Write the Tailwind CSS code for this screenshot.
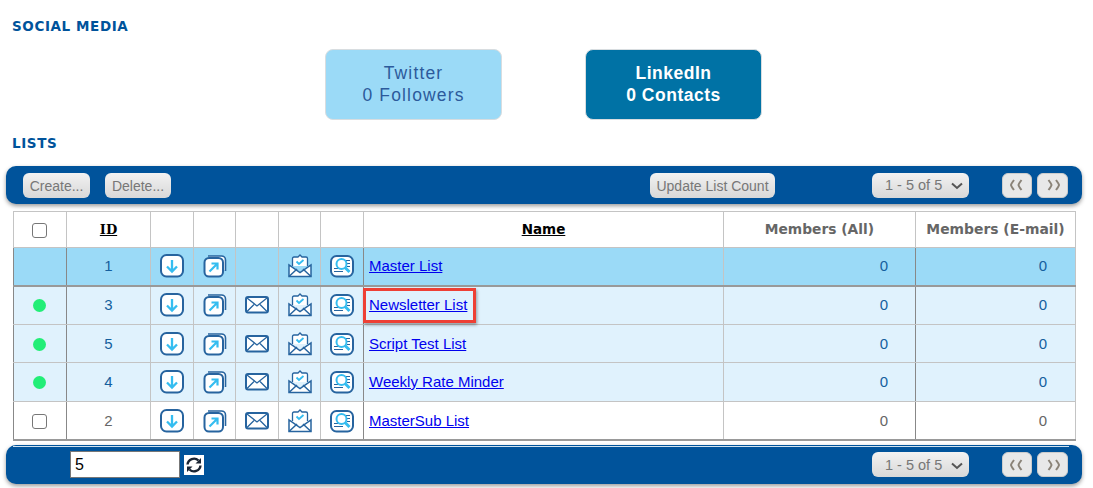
<!DOCTYPE html>
<html lang="en">
<head>
  <meta charset="UTF-8" />
  <title>Lists</title>
  <script src="https://cdn.jsdelivr.net/npm/@tailwindcss/browser@4"></script>
</head>
<body class="bg-white font-['Liberation_Sans',Arial,sans-serif] overflow-hidden">
  <!-- icon set -->
  <svg class="hidden">
    <symbol id="i-down" viewBox="0 0 26 24">
      <rect x="2" y="1" width="22" height="21.500" rx="5.500" fill="#fff" stroke="#27649f" stroke-width="2" />
      <path d="M13 6v11M8 12.500 13 17.500l5-5" fill="none" stroke="#35bdf0" stroke-width="2.300" />
    </symbol>
    <symbol id="i-copy" viewBox="0 0 26 24">
      <path d="M6 2h13.500a4 4 0 0 1 4 4v11" fill="#fff" stroke="#27649f" stroke-width="1.600" />
      <rect x="2.500" y="4" width="18.500" height="18.500" rx="4.500" fill="#fff" stroke="#27649f" stroke-width="2" />
      <path d="M7.500 17.500 15 10M9.500 9.500h6v6" fill="none" stroke="#35bdf0" stroke-width="2.200" />
    </symbol>
    <symbol id="i-mail" viewBox="0 0 26 20">
      <rect x="2" y="2" width="22" height="15.500" rx="2" fill="#fff" stroke="#27649f" stroke-width="2" />
      <path d="M3 3 13 11l10-8M3 16.500 10 9.500M23 16.500 16 9.500" fill="none" stroke="#27649f" stroke-width="1.300" />
    </symbol>
    <symbol id="i-open" viewBox="0 0 26 24">
      <path d="M5.500 12V4.500q0-1.500 1.500-1.500h4l2-2 2 2h4q1.500 0 1.500 1.500V12" fill="#fff" stroke="#27649f" stroke-width="1.300" />
      <path d="M9.500 7.500l2.500 2.500 4.500-4" fill="none" stroke="#35bdf0" stroke-width="1.800" />
      <path d="M2 11v11.500h22V11l-11 7.500z" fill="#fff" stroke="#27649f" stroke-width="1.500" />
      <path d="M2 22.500l8-7.500M24 22.500l-8-7.500" fill="none" stroke="#27649f" stroke-width="1.500" />
    </symbol>
    <symbol id="i-report" viewBox="0 0 26 24">
      <rect x="2" y="2" width="22" height="20.500" rx="5.500" fill="#fff" stroke="#27649f" stroke-width="2" />
      <path d="M16 6.500h5M18 9.500h3M18 12.500h3M5 14.500h4M5 17.500h9" fill="none" stroke="#27649f" stroke-width="1.200" />
      <circle cx="12.500" cy="10" r="5" fill="#fff" stroke="#35bdf0" stroke-width="2" />
      <path d="M16 13.500l4.500 4.500" fill="none" stroke="#35bdf0" stroke-width="3" />
    </symbol>
    <symbol id="i-prev" viewBox="0 0 16 12">
      <path d="M5 1Q2 5 2 6t3 5M12.500 1Q9.500 5 9.500 6t3 5" fill="none" stroke="#8a8378" stroke-width="2" />
    </symbol>
    <symbol id="i-next" viewBox="0 0 16 12">
      <path d="M3.500 1Q6.500 5 6.500 6t-3 5M11 1Q14 5 14 6t-3 5" fill="none" stroke="#8a8378" stroke-width="2" />
    </symbol>
  </svg>

  <main class="w-[1093px] h-[488px] overflow-hidden">
    <h2 class="pl-3 pt-[18px] h-[49px] font-['DejaVu_Sans',sans-serif] font-bold text-[13.500px] tracking-[0.6px] leading-4 text-[#00539b]">SOCIAL MEDIA</h2>

    <div class="flex gap-[83px] pl-[325px]">
      <div class="w-[177px] h-[71px] rounded-lg border border-[#d8dde0] bg-[#9bdaf7] flex flex-col justify-center pb-[2px] text-center text-[17.500px] leading-[22px] tracking-[1.150px] text-[#2c5a9c]">
        <span>Twitter</span>
        <span>0 Followers</span>
      </div>
      <div class="w-[177px] h-[71px] rounded-lg border border-[#d8dde0] bg-[#0072a5] flex flex-col justify-center pb-[2px] text-center text-[17.500px] leading-[22px] tracking-[0.500px] font-bold text-white">
        <span>LinkedIn</span>
        <span>0 Contacts</span>
      </div>
    </div>

    <h2 class="pl-3 mt-[15px] h-[31px] font-['DejaVu_Sans',sans-serif] font-bold text-[13.500px] tracking-[0.6px] leading-4 text-[#00539b]">LISTS</h2>

    <!-- top toolbar -->
    <div class="ml-[6px] w-[1076px] h-[38px] rounded-[10px] bg-[#00539b] shadow-[0_2px_4px_rgba(0,0,0,0.4)] flex items-center pl-[17px] text-[14px] text-[#777]">
      <button class="w-[67px] h-[25px] rounded-md bg-gradient-to-b from-[#f2f2f2] to-[#d8d8d8] pt-[3px]">Create...</button>
      <button class="w-[66px] h-[25px] ml-[15px] rounded-md bg-gradient-to-b from-[#f2f2f2] to-[#d8d8d8] pt-[3px]">Delete...</button>
      <button class="w-[125px] h-[25px] ml-[479px] rounded-md bg-gradient-to-b from-[#f2f2f2] to-[#d8d8d8] pt-[3px]">Update List Count</button>
      <div class="w-[97px] h-[25px] ml-[97px] rounded-md bg-gradient-to-b from-[#f2f2f2] to-[#d8d8d8] flex items-center justify-between pt-[2px] pl-[13px] pr-[6px] text-[14.500px]">
        <span>1 - 5 of 5</span>
        <svg width="12" height="8" viewBox="0 0 12 8"><path d="M1 1.500 6 6l5-4.500" fill="none" stroke="#555" stroke-width="2" /></svg>
      </div>
      <button class="w-[30px] h-[25px] ml-[33px] rounded-md bg-[#e8e8e8] border border-[#ccc] flex items-center justify-center"><svg width="16" height="12"><use href="#i-prev" /></svg></button>
      <button class="w-[31px] h-[25px] ml-[5px] rounded-md bg-[#e8e8e8] border border-[#ccc] flex items-center justify-center"><svg width="16" height="12"><use href="#i-next" /></svg></button>
    </div>

    <!-- table -->
    <div class="relative ml-[13px] mt-[7px] w-[1062px]">
      <table class="table-fixed border-collapse w-[1062px] text-[15px] border-t border-r border-[#c4c4c4] border-b-2 border-b-[#999]">
        <colgroup>
          <col class="w-[53px]" /><col class="w-[84px]" /><col class="w-[43px]" /><col class="w-[42px]" /><col class="w-[43px]" /><col class="w-[42px]" /><col class="w-[43px]" /><col class="w-[360px]" /><col class="w-[192px]" /><col class="w-[160px]" />
        </colgroup>
        <thead>
          <tr class="h-[36px] bg-white [&>th]:border-b [&>th]:border-[#c4c4c4]">
            <th class="border-l border-l-[#888] text-center align-middle pr-[2px]"><span class="inline-block w-[15px] h-[15px] rounded-[3px] border border-[#777] bg-white align-middle"></span></th>
            <th class="border-l border-l-[#888] font-['DejaVu_Serif',serif] text-[13px] text-black underline">ID</th>
            <th class="border-l border-l-[#c4c4c4]"></th>
            <th class="border-l border-l-[#c4c4c4]"></th>
            <th class="border-l border-l-[#c4c4c4]"></th>
            <th class="border-l border-l-[#c4c4c4]"></th>
            <th class="border-l border-l-[#c4c4c4]"></th>
            <th class="border-l border-l-[#888] font-['DejaVu_Sans',sans-serif] text-[13.500px] text-black underline">Name</th>
            <th class="border-l border-l-[#c4c4c4] text-right pr-[41px] font-['DejaVu_Sans',sans-serif] text-[13.800px] text-[#666]">Members (All)</th>
            <th class="border-l border-l-[#888] text-center font-['DejaVu_Sans',sans-serif] text-[13.900px] text-[#666]">Members (E-mail)</th>
          </tr>
        </thead>
        <tbody class="[&_svg]:mx-auto [&_a]:text-[#0000ee] [&_a]:underline [&_a]:text-[15px]">
          <tr class="h-[38px] bg-[#9bdaf7] text-[#155f9e] [&>td]:border-b-2 [&>td]:border-b-[#999]">
            <td class="border-l border-l-[#888]"></td>
            <td class="border-l border-l-[#888] text-center">1</td>
            <td class="border-l border-l-[#c4c4c4]"><svg width="26" height="24"><use href="#i-down" /></svg></td>
            <td class="border-l border-l-[#c4c4c4]"><svg width="26" height="24"><use href="#i-copy" /></svg></td>
            <td class="border-l border-l-[#c4c4c4]"></td>
            <td class="border-l border-l-[#c4c4c4]"><svg width="26" height="24"><use href="#i-open" /></svg></td>
            <td class="border-l border-l-[#c4c4c4]"><svg width="26" height="24"><use href="#i-report" /></svg></td>
            <td class="border-l border-l-[#888] pl-[5px]"><a href="#">Master List</a></td>
            <td class="border-l border-l-[#c4c4c4] text-right pr-[27px]">0</td>
            <td class="border-l border-l-[#888] text-right pr-[28px]">0</td>
          </tr>
          <tr class="h-[39px] bg-[#e0f2fd] text-[#155f9e] [&>td]:border-b [&>td]:border-b-[#c4c4c4]">
            <td class="border-l border-l-[#888] pr-[2px]"><div class="mx-auto w-[13px] h-[13px] rounded-full bg-[#22ee77]"></div></td>
            <td class="border-l border-l-[#888] text-center">3</td>
            <td class="border-l border-l-[#c4c4c4]"><svg width="26" height="24"><use href="#i-down" /></svg></td>
            <td class="border-l border-l-[#c4c4c4]"><svg width="26" height="24"><use href="#i-copy" /></svg></td>
            <td class="border-l border-l-[#c4c4c4]"><svg width="26" height="20"><use href="#i-mail" /></svg></td>
            <td class="border-l border-l-[#c4c4c4]"><svg width="26" height="24"><use href="#i-open" /></svg></td>
            <td class="border-l border-l-[#c4c4c4]"><svg width="26" height="24"><use href="#i-report" /></svg></td>
            <td class="border-l border-l-[#888] pl-[5px]"><a href="#">Newsletter List</a></td>
            <td class="border-l border-l-[#c4c4c4] text-right pr-[27px]">0</td>
            <td class="border-l border-l-[#888] text-right pr-[28px]">0</td>
          </tr>
          <tr class="h-[38px] bg-[#e0f2fd] text-[#155f9e] [&>td]:border-b [&>td]:border-b-[#c4c4c4] [&>td]:pt-px">
            <td class="border-l border-l-[#888] pr-[2px]"><div class="mx-auto w-[13px] h-[13px] rounded-full bg-[#22ee77]"></div></td>
            <td class="border-l border-l-[#888] text-center">5</td>
            <td class="border-l border-l-[#c4c4c4]"><svg width="26" height="24"><use href="#i-down" /></svg></td>
            <td class="border-l border-l-[#c4c4c4]"><svg width="26" height="24"><use href="#i-copy" /></svg></td>
            <td class="border-l border-l-[#c4c4c4]"><svg width="26" height="20"><use href="#i-mail" /></svg></td>
            <td class="border-l border-l-[#c4c4c4]"><svg width="26" height="24"><use href="#i-open" /></svg></td>
            <td class="border-l border-l-[#c4c4c4]"><svg width="26" height="24"><use href="#i-report" /></svg></td>
            <td class="border-l border-l-[#888] pl-[5px]"><a href="#">Script Test List</a></td>
            <td class="border-l border-l-[#c4c4c4] text-right pr-[27px]">0</td>
            <td class="border-l border-l-[#888] text-right pr-[28px]">0</td>
          </tr>
          <tr class="h-[39px] bg-[#e0f2fd] text-[#155f9e] [&>td]:border-b [&>td]:border-b-[#c4c4c4]">
            <td class="border-l border-l-[#888] pr-[2px]"><div class="mx-auto w-[13px] h-[13px] rounded-full bg-[#22ee77]"></div></td>
            <td class="border-l border-l-[#888] text-center">4</td>
            <td class="border-l border-l-[#c4c4c4]"><svg width="26" height="24"><use href="#i-down" /></svg></td>
            <td class="border-l border-l-[#c4c4c4]"><svg width="26" height="24"><use href="#i-copy" /></svg></td>
            <td class="border-l border-l-[#c4c4c4]"><svg width="26" height="20"><use href="#i-mail" /></svg></td>
            <td class="border-l border-l-[#c4c4c4]"><svg width="26" height="24"><use href="#i-open" /></svg></td>
            <td class="border-l border-l-[#c4c4c4]"><svg width="26" height="24"><use href="#i-report" /></svg></td>
            <td class="border-l border-l-[#888] pl-[5px]"><a href="#">Weekly Rate Minder</a></td>
            <td class="border-l border-l-[#c4c4c4] text-right pr-[27px]">0</td>
            <td class="border-l border-l-[#888] text-right pr-[28px]">0</td>
          </tr>
          <tr class="h-[38px] bg-white text-[#666] [&>td]:pt-px">
            <td class="border-l border-l-[#888] text-center pr-[2px]"><span class="inline-block w-[15px] h-[15px] rounded-[3px] border border-[#777] bg-white align-middle"></span></td>
            <td class="border-l border-l-[#888] text-center">2</td>
            <td class="border-l border-l-[#c4c4c4]"><svg width="26" height="24"><use href="#i-down" /></svg></td>
            <td class="border-l border-l-[#c4c4c4]"><svg width="26" height="24"><use href="#i-copy" /></svg></td>
            <td class="border-l border-l-[#c4c4c4]"><svg width="26" height="20"><use href="#i-mail" /></svg></td>
            <td class="border-l border-l-[#c4c4c4]"><svg width="26" height="24"><use href="#i-open" /></svg></td>
            <td class="border-l border-l-[#c4c4c4]"><svg width="26" height="24"><use href="#i-report" /></svg></td>
            <td class="border-l border-l-[#888] pl-[5px]"><a href="#">MasterSub List</a></td>
            <td class="border-l border-l-[#c4c4c4] text-right pr-[27px]">0</td>
            <td class="border-l border-l-[#888] text-right pr-[28px]">0</td>
          </tr>
        </tbody>
      </table>
      <!-- callout round Newsletter List -->
      <div class="absolute left-[350px] top-[77px] w-[113px] h-[35px] border-[3px] border-[#ee4035] shadow-[1px_2px_3px_rgba(0,0,0,0.35)]"></div>
    </div>

    <!-- bottom toolbar -->
    <div class="relative ml-[6px] mt-[4px] w-[1076px] h-[39px] rounded-[10px] bg-[#00539b] shadow-[0_2px_4px_rgba(0,0,0,0.4)] flex items-center pt-[1px] pl-[64px] text-[14.500px] text-[#777]">
      <div class="absolute left-[7px] top-[1px] w-[1056px] h-px bg-[#cfe3f2]"></div>
      <div class="w-[110px] h-[27px] bg-white border border-[#777] pl-1 text-[16px] leading-[25px] text-black">5</div>
      <div class="w-5 h-5 ml-[4px] bg-white flex items-center justify-center">
        <svg width="18" height="18" viewBox="0 0 18 18"><path d="M2.500 8.500a6.500 6.500 0 0 1 11-4M15.500 9.500a6.500 6.500 0 0 1-11 4" fill="none" stroke="#1a2433" stroke-width="2.400" /><path d="M16 2v5.500h-5.500zM2 16v-5.500h5.500z" fill="#1a2433" /></svg>
      </div>
      <div class="w-[97px] h-[25px] ml-[668px] rounded-md bg-gradient-to-b from-[#f2f2f2] to-[#d8d8d8] flex items-center justify-between pt-[2px] pl-[13px] pr-[6px]">
        <span>1 - 5 of 5</span>
        <svg width="12" height="8" viewBox="0 0 12 8"><path d="M1 1.500 6 6l5-4.500" fill="none" stroke="#555" stroke-width="2" /></svg>
      </div>
      <button class="w-[30px] h-[25px] ml-[33px] rounded-md bg-[#e8e8e8] border border-[#ccc] flex items-center justify-center"><svg width="16" height="12"><use href="#i-prev" /></svg></button>
      <button class="w-[31px] h-[25px] ml-[5px] rounded-md bg-[#e8e8e8] border border-[#ccc] flex items-center justify-center"><svg width="16" height="12"><use href="#i-next" /></svg></button>
    </div>
  </main>
</body>
</html>
